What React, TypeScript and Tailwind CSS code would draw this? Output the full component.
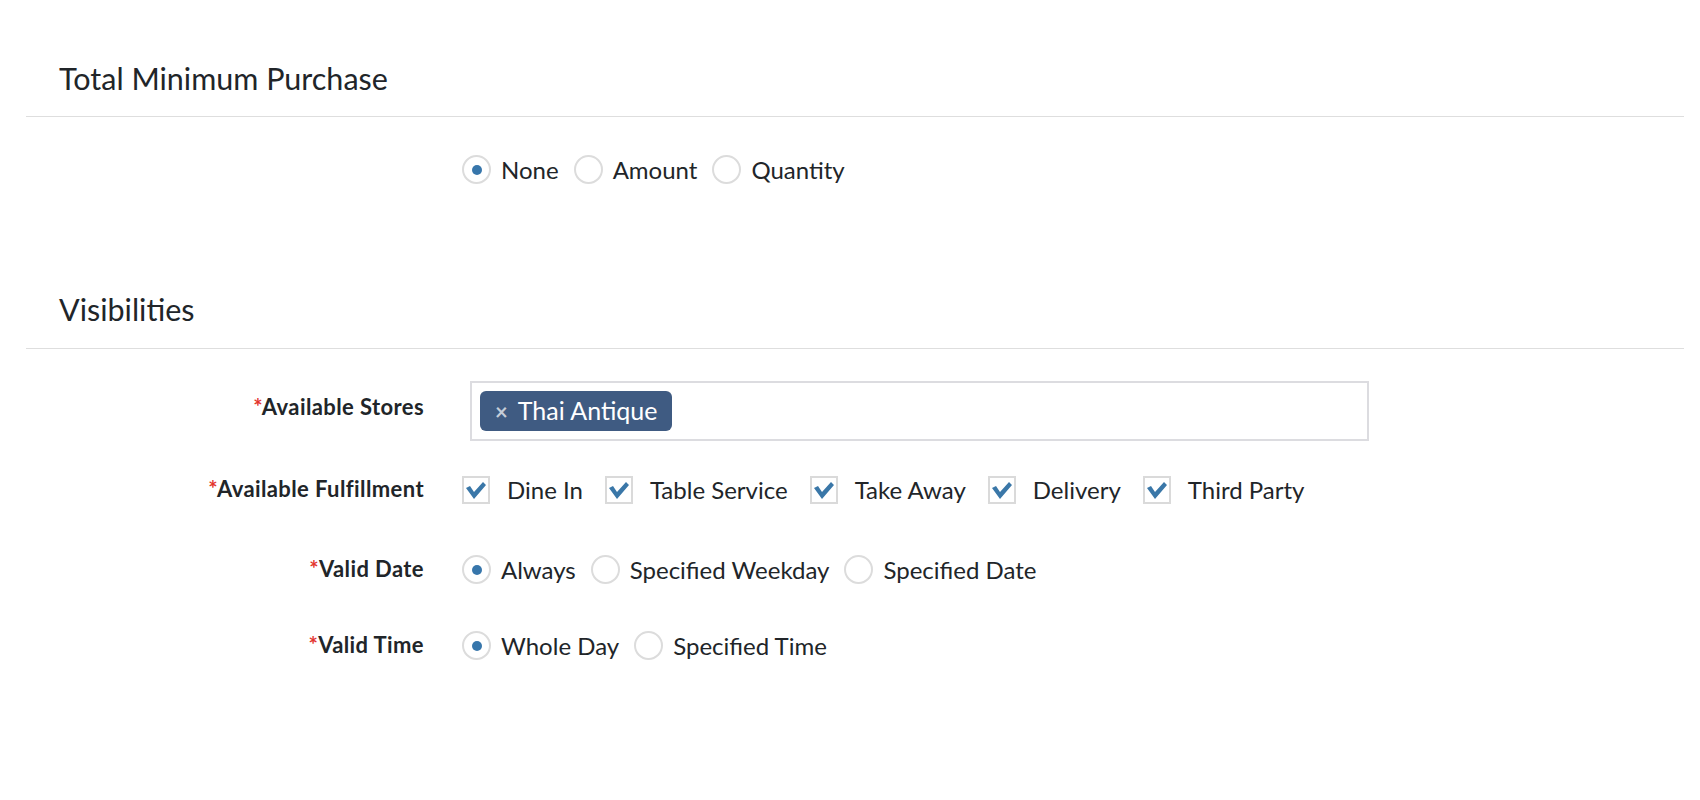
import React, { useState } from 'react';

const font = { fontFamily: 'Lato, "Liberation Sans", sans-serif' };

const Radio: React.FC<{ checked: boolean; label: string; onClick: () => void }> = ({ checked, label, onClick }) => (
  <label onClick={onClick} className="flex items-center cursor-pointer mr-[15px]">
    <span className="w-[29px] h-[29px] rounded-full border-2 border-[#dcdcdc] bg-white flex items-center justify-center shrink-0">
      {checked && <span className="w-[10px] h-[10px] rounded-full bg-[#3776ab]" />}
    </span>
    <span className="ml-[10px] text-[24px] text-[#212529] leading-none">{label}</span>
  </label>
);

const Checkbox: React.FC<{ checked: boolean; label: string; onClick: () => void }> = ({ checked, label, onClick }) => (
  <label onClick={onClick} className="flex items-center cursor-pointer mr-[22px]">
    <span className="w-[28px] h-[28px] border-2 border-[#dadada] bg-white flex items-center justify-center shrink-0">
      {checked && (
        <svg width="22" height="20" viewBox="0 0 22 20">
          <path d="M1 8 L5 6 L9 12 L18 2 L21 5 L9 19 Z" fill="#3a77a8" />
        </svg>
      )}
    </span>
    <span className="ml-[17px] text-[24px] text-[#212529] leading-none">{label}</span>
  </label>
);

const FieldLabel: React.FC<{ text: string }> = ({ text }) => (
  <span className="text-[22px] tracking-[0.4px] font-bold text-[#212529] leading-6">
    <span className="text-[#e3342f]">*</span>
    {text}
  </span>
);

const SectionTitle: React.FC<{ title: string }> = ({ title }) => (
  <>
    <h3 className="pl-[33px] text-[30.5px] leading-9 text-[#212529]">{title}</h3>
    <div className="border-t border-[#dedede]" />
  </>
);

export default function App() {
  const [minPurchase, setMinPurchase] = useState('None');
  const [fulfillment, setFulfillment] = useState<Record<string, boolean>>({
    'Dine In': true,
    'Table Service': true,
    'Take Away': true,
    Delivery: true,
    'Third Party': true,
  });
  const [validDate, setValidDate] = useState('Always');
  const [validTime, setValidTime] = useState('Whole Day');

  return (
    <div className="min-h-[800px] bg-white pl-[26px] pr-[16px] pt-[60px]" style={font}>
      <div className="[&>h3]:mb-[20px]">
        <SectionTitle title="Total Minimum Purchase" />
      </div>
      <div className="flex mt-[38px]">
        <div className="w-[436px] shrink-0" />
        <div className="flex">
          {['None', 'Amount', 'Quantity'].map((o) => (
            <Radio key={o} label={o} checked={minPurchase === o} onClick={() => setMinPurchase(o)} />
          ))}
        </div>
      </div>

      <div className="mt-[107px] [&>h3]:mb-[21px]">
        <SectionTitle title="Visibilities" />
      </div>

      <div className="flex items-start mt-[32px]">
        <div className="w-[398px] shrink-0 text-right pt-[14px]">
          <FieldLabel text="Available Stores" />
        </div>
        <div className="ml-[46px] w-[899px] h-[60px] border-2 border-[#dcdce0] px-[8px] flex items-center">
          <span className="h-[40px] px-[15px] rounded-[6px] bg-[#3f5b82] text-white flex items-center text-[25px]">
            <span className="text-[#c5cdd8] text-[22px] font-bold mr-[10px]">×</span>
            Thai Antique
          </span>
        </div>
      </div>

      <div className="flex items-center mt-[35px]">
        <div className="w-[398px] shrink-0 text-right">
          <FieldLabel text="Available Fulfillment" />
        </div>
        <div className="ml-[38px] flex">
          {Object.keys(fulfillment).map((k) => (
            <Checkbox
              key={k}
              label={k}
              checked={fulfillment[k]}
              onClick={() => setFulfillment({ ...fulfillment, [k]: !fulfillment[k] })}
            />
          ))}
        </div>
      </div>

      <div className="flex items-center mt-[51px]">
        <div className="w-[398px] shrink-0 text-right">
          <FieldLabel text="Valid Date" />
        </div>
        <div className="ml-[38px] flex">
          {['Always', 'Specified Weekday', 'Specified Date'].map((o) => (
            <Radio key={o} label={o} checked={validDate === o} onClick={() => setValidDate(o)} />
          ))}
        </div>
      </div>

      <div className="flex items-center mt-[47px]">
        <div className="w-[398px] shrink-0 text-right">
          <FieldLabel text="Valid Time" />
        </div>
        <div className="ml-[38px] flex">
          {['Whole Day', 'Specified Time'].map((o) => (
            <Radio key={o} label={o} checked={validTime === o} onClick={() => setValidTime(o)} />
          ))}
        </div>
      </div>
    </div>
  );
}
